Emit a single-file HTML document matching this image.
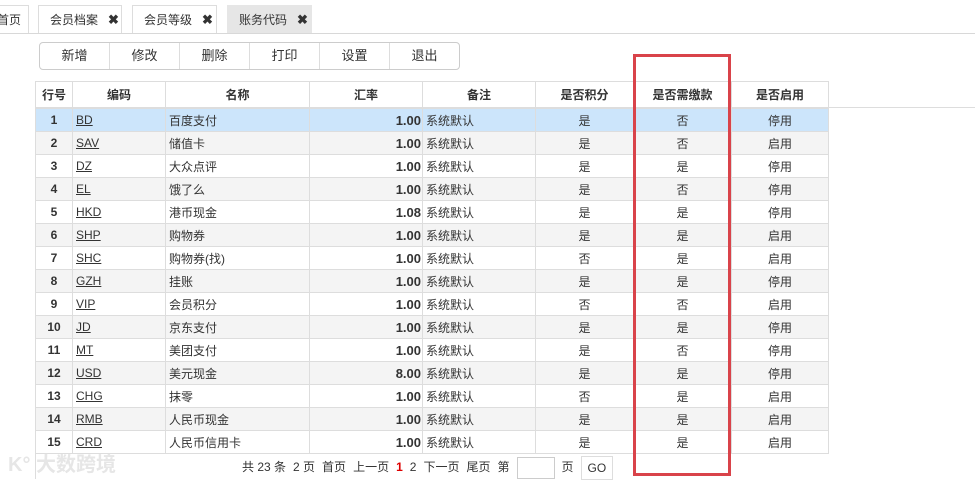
<!DOCTYPE html>
<html><head><meta charset="utf-8"><style>
body{margin:0;width:975px;height:479px;overflow:hidden;background:#fff;font-family:"Liberation Sans","Noto Sans CJK SC",sans-serif;font-size:12px;color:#333;position:relative}
.tabline{position:absolute;left:0;top:33px;width:975px;height:1px;background:#d8d8d8}
.tab{position:absolute;top:5px;height:28px;border:1px solid #ddd;border-bottom:none;line-height:28px;box-sizing:border-box;background:#fff;font-size:12px}
.tab b{font-size:13px;margin-left:10px}
.btns{position:absolute;left:39px;top:42px;height:28px;border:1px solid #ccc;border-radius:4px;display:flex;box-sizing:border-box}
.btns div{width:69px;text-align:center;line-height:26px;border-right:1px solid #ddd;font-size:13px}
.btns div:last-child{border-right:none}
table{position:absolute;left:35px;top:81px;border-collapse:collapse;table-layout:fixed}
td,th{border:1px solid #ddd;height:22px;padding:0 3px;white-space:nowrap;overflow:hidden}
th{height:25px;font-weight:bold;text-align:center;border-bottom:2px solid #ddd}
tr:nth-child(odd) td{background:#f4f4f4}
tr.sel td{background:#cce5fb}
td.n{text-align:center;font-weight:bold}
td.c u{color:#333}
td.r{text-align:right;font-weight:bold;padding-right:1px;font-size:13px}
td.m{text-align:center}
.hl{position:absolute;left:828px;top:107px;width:147px;height:1px;background:#ddd}
.red{position:absolute;left:633px;top:54px;width:98px;height:422px;border:3px solid #d9434a;box-sizing:border-box}
.pg{position:absolute;top:456px;left:242px;font-size:12px;line-height:22px}
.pg span{margin-right:7px}
.box{display:inline-block;width:36px;height:20px;border:1px solid #ccc;vertical-align:middle;margin-right:6px}
.go{display:inline-block;border:1px solid #ddd;padding:0 6px;height:22px;line-height:22px;vertical-align:middle}
.wm{position:absolute;left:8px;top:448px;font-size:20px;color:#e6e6e6;font-weight:bold}
</style></head><body>
<div class="tab" style="left:-40px;width:69px;padding-left:36px">首页</div>
<div class="tab" style="left:38px;width:84px;padding-left:11px">会员档案<b>✖</b></div>
<div class="tab" style="left:132px;width:85px;padding-left:11px">会员等级<b>✖</b></div>
<div class="tab" style="left:227px;width:85px;padding-left:11px;background:#e6e6e6;border-color:#e6e6e6">账务代码<b>✖</b></div>
<div class="tabline"></div>
<div class="btns"><div>新增</div><div>修改</div><div>删除</div><div>打印</div><div>设置</div><div>退出</div></div>
<div class="hl"></div>
<table>
<colgroup><col style="width:37px"><col style="width:93px"><col style="width:144px"><col style="width:113px"><col style="width:113px"><col style="width:98px"><col style="width:98px"><col style="width:97px"></colgroup>
<tr><th>行号</th><th>编码</th><th>名称</th><th>汇率</th><th>备注</th><th>是否积分</th><th>是否需缴款</th><th>是否启用</th></tr>
<tr class="sel"><td class="n">1</td><td class="c"><u>BD</u></td><td>百度支付</td><td class="r">1.00</td><td>系统默认</td><td class="m">是</td><td class="m">否</td><td class="m">停用</td></tr>
<tr><td class="n">2</td><td class="c"><u>SAV</u></td><td>储值卡</td><td class="r">1.00</td><td>系统默认</td><td class="m">是</td><td class="m">否</td><td class="m">启用</td></tr>
<tr><td class="n">3</td><td class="c"><u>DZ</u></td><td>大众点评</td><td class="r">1.00</td><td>系统默认</td><td class="m">是</td><td class="m">是</td><td class="m">停用</td></tr>
<tr><td class="n">4</td><td class="c"><u>EL</u></td><td>饿了么</td><td class="r">1.00</td><td>系统默认</td><td class="m">是</td><td class="m">否</td><td class="m">停用</td></tr>
<tr><td class="n">5</td><td class="c"><u>HKD</u></td><td>港币现金</td><td class="r">1.08</td><td>系统默认</td><td class="m">是</td><td class="m">是</td><td class="m">停用</td></tr>
<tr><td class="n">6</td><td class="c"><u>SHP</u></td><td>购物券</td><td class="r">1.00</td><td>系统默认</td><td class="m">是</td><td class="m">是</td><td class="m">启用</td></tr>
<tr><td class="n">7</td><td class="c"><u>SHC</u></td><td>购物券(找)</td><td class="r">1.00</td><td>系统默认</td><td class="m">否</td><td class="m">是</td><td class="m">启用</td></tr>
<tr><td class="n">8</td><td class="c"><u>GZH</u></td><td>挂账</td><td class="r">1.00</td><td>系统默认</td><td class="m">是</td><td class="m">是</td><td class="m">停用</td></tr>
<tr><td class="n">9</td><td class="c"><u>VIP</u></td><td>会员积分</td><td class="r">1.00</td><td>系统默认</td><td class="m">否</td><td class="m">否</td><td class="m">启用</td></tr>
<tr><td class="n">10</td><td class="c"><u>JD</u></td><td>京东支付</td><td class="r">1.00</td><td>系统默认</td><td class="m">是</td><td class="m">是</td><td class="m">停用</td></tr>
<tr><td class="n">11</td><td class="c"><u>MT</u></td><td>美团支付</td><td class="r">1.00</td><td>系统默认</td><td class="m">是</td><td class="m">否</td><td class="m">停用</td></tr>
<tr><td class="n">12</td><td class="c"><u>USD</u></td><td>美元现金</td><td class="r">8.00</td><td>系统默认</td><td class="m">是</td><td class="m">是</td><td class="m">停用</td></tr>
<tr><td class="n">13</td><td class="c"><u>CHG</u></td><td>抹零</td><td class="r">1.00</td><td>系统默认</td><td class="m">否</td><td class="m">是</td><td class="m">启用</td></tr>
<tr><td class="n">14</td><td class="c"><u>RMB</u></td><td>人民币现金</td><td class="r">1.00</td><td>系统默认</td><td class="m">是</td><td class="m">是</td><td class="m">启用</td></tr>
<tr><td class="n">15</td><td class="c"><u>CRD</u></td><td>人民币信用卡</td><td class="r">1.00</td><td>系统默认</td><td class="m">是</td><td class="m">是</td><td class="m">启用</td></tr>
</table>
<div style="position:absolute;left:35px;top:454px;width:1px;height:25px;background:#ddd"></div>
<div class="wm">K° 大数跨境</div>
<div class="pg"><span>共 23 条</span><span>2 页</span><span>首页</span><span>上一页</span><span style="color:#d00;font-weight:bold">1</span><span>2</span><span>下一页</span><span>尾页</span><span>第</span><span class="box"></span><span>页</span><span class="go">GO</span></div>
<div class="red"></div>
</body></html>
